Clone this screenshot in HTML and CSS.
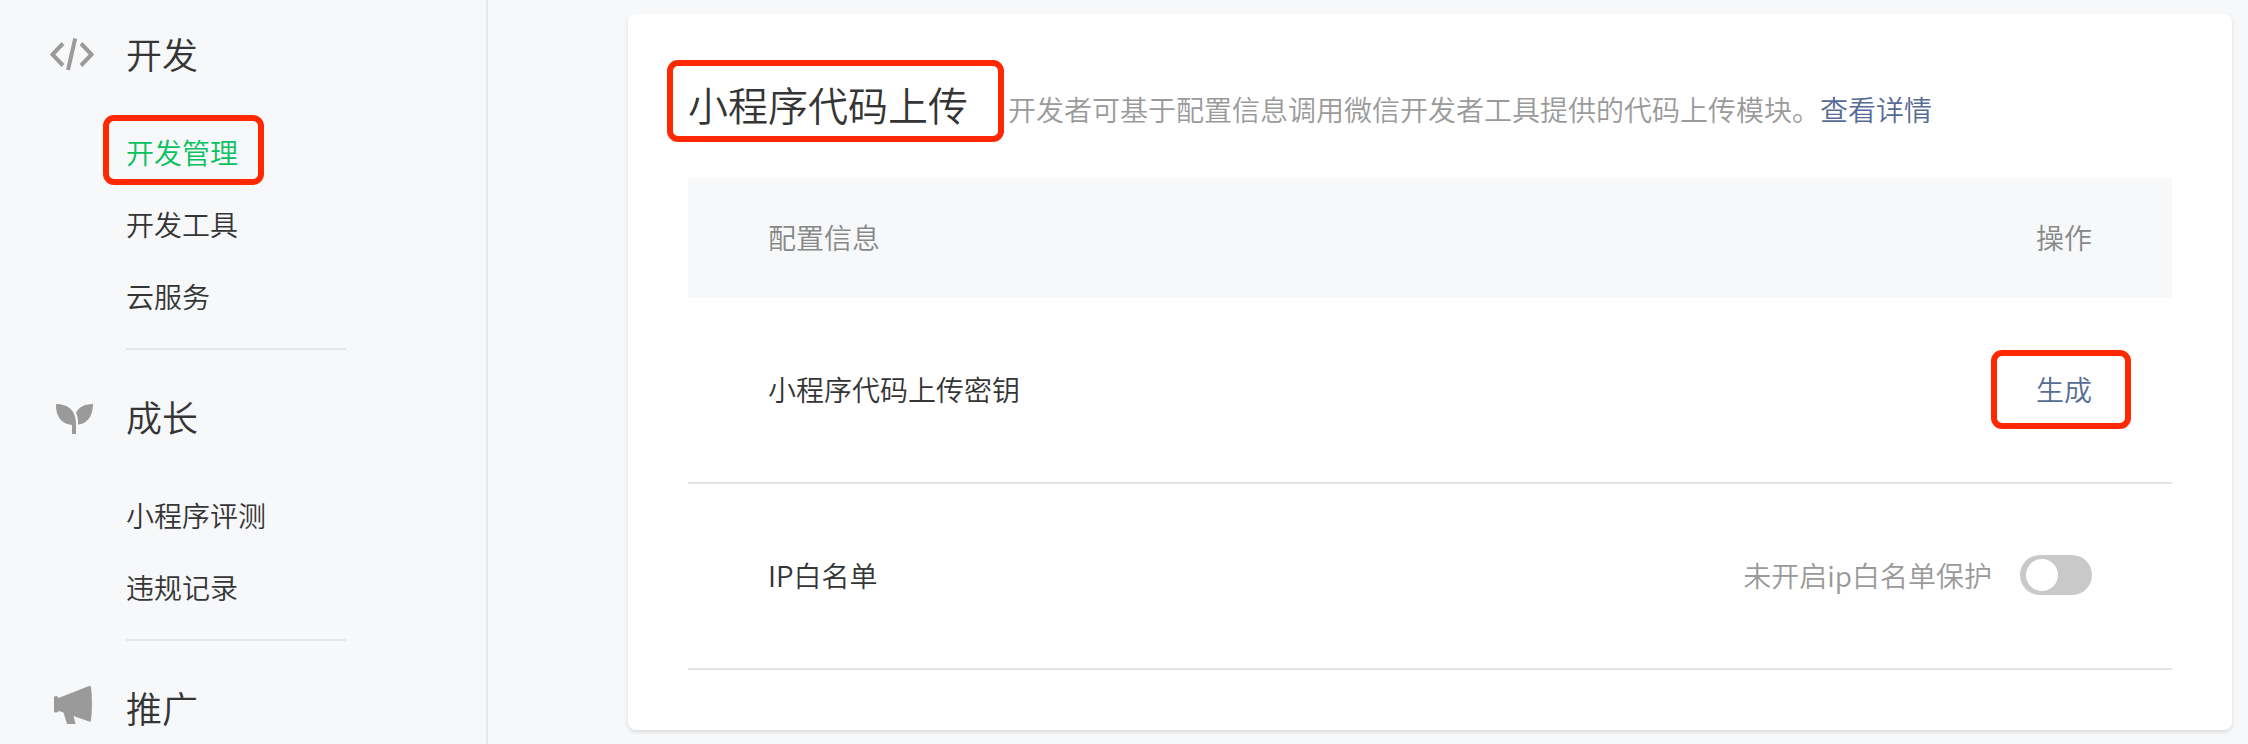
FILE: index.html
```html
<!DOCTYPE html>
<html lang="zh-CN">
<head>
<meta charset="utf-8">
<meta name="viewport" content="width=device-width, initial-scale=1">
<title>开发管理</title>
<link rel="stylesheet" href="styles.css">
</head>
<body>
<div class="layout">
  <nav class="sidebar">
    <section class="group">
      <h2 class="group-title">
        <svg class="icon" viewBox="0 -1 48 48" aria-hidden="true"><g fill="none" stroke="#9a9a9a" stroke-width="4"><path d="M15 13.500L4.500 24.500L15 35.500"/><path d="M33 13.500L43.500 24.500L33 35.500"/><path d="M27.200 8.500L20 40"/></g></svg>
        开发
      </h2>
      <ul class="menu">
        <li><a class="menu-link active marked mark-menu" href="#manage">开发管理</a></li>
        <li><a class="menu-link" href="#tools">开发工具</a></li>
        <li><a class="menu-link" href="#cloud">云服务</a></li>
      </ul>
    </section>
    <section class="group">
      <h2 class="group-title">
        <svg class="icon" viewBox="-2 -4 48 48" aria-hidden="true"><g fill="#9a9a9a"><path d="M6 8C18 8 25.500 14 26 27V38H22V29C12 28 5.500 21 6 8Z"/><path d="M43 8C34 8 29 11.500 26 16.500C27.500 20 28.300 24 28 28.500C37.500 28 43 19.500 43 8Z"/></g></svg>
        成长
      </h2>
      <ul class="menu">
        <li><a class="menu-link" href="#review">小程序评测</a></li>
        <li><a class="menu-link" href="#violation">违规记录</a></li>
      </ul>
    </section>
    <section class="group">
      <h2 class="group-title">
        <svg class="icon" viewBox="-2 -1 48 48" aria-hidden="true"><path fill="#9a9a9a" d="M4 13.500Q4 12 6 12Q8 12 8.500 14L39 2Q40.500 1.500 41 3Q43 20 41 36.500Q40.500 38.500 39 37.500L23.500 32L25.500 40H17L13.500 28.500L9 27Q8 28.500 6 28.500Q4 28.500 4 27Z"/></svg>
        推广
      </h2>
    </section>
  </nav>
  <main class="content">
    <section class="card">
      <header class="card-head">
        <h1 class="card-title marked mark-title">小程序代码上传</h1>
        <p class="card-desc">开发者可基于配置信息调用微信开发者工具提供的代码上传模块。<a class="link" href="#detail">查看详情</a></p>
      </header>
      <table class="table">
        <thead>
          <tr><th scope="col">配置信息</th><th scope="col" class="ops">操作</th></tr>
        </thead>
        <tbody>
          <tr>
            <td>小程序代码上传密钥</td>
            <td class="ops"><button class="link button marked mark-button" type="button">生成</button></td>
          </tr>
          <tr>
            <td>IP白名单</td>
            <td class="ops"><label class="switch-row">未开启ip白名单保护<input class="switch" type="checkbox" role="switch"></label></td>
          </tr>
        </tbody>
      </table>
    </section>
  </main>
</div>
</body>
</html>
```
FILE: styles.css
```css
* { box-sizing: border-box; }

body {
  margin: 0;
  background: #f7f8fa;
  color: #353535;
  font: 350 28px/40px "Noto Sans CJK SC DemiLight", "Noto Sans CJK SC", sans-serif;
}

h1, h2, p, ul { margin: 0; padding: 0; font-weight: inherit; }
ul { list-style: none; }
a { text-decoration: none; }

.layout {
  display: flex;
  height: 100vh;
  overflow: hidden;
}

.sidebar {
  flex: 0 0 488px;
  padding-top: 27px;
  border-right: 2px solid #e5e7e9;
}

.group-title {
  display: flex;
  align-items: center;
  gap: 30px;
  padding-left: 48px;
  font-size: 36px;
  line-height: 52px;
}

.icon { width: 48px; height: 48px; }

.menu {
  display: flex;
  flex-direction: column;
  gap: 32px;
  width: 220px;
  margin: 53px 0 40px 126px;
  padding-bottom: 32px;
  border-bottom: 2px solid #e5e7e9;
}

.menu-link { display: inline-block; vertical-align: top; color: #353535; }
.menu-link.active { color: #07c160; }

.content {
  flex: 1;
  min-width: 0;
  padding: 14px 16px 14px 140px;
}

.card {
  padding: 60px 60px;
  border-radius: 8px;
  background: #fff;
  box-shadow: 0 2px 4px rgba(0, 0, 0, 0.12);
}

.card-head {
  display: flex;
  align-items: baseline;
  gap: 40px;
  margin-bottom: 44px;
}

.card-title { font-size: 40px; line-height: 60px; }
.card-desc { color: #9a9a9a; }

.link { color: #576b95; }

.button {
  padding: 0;
  border: 0;
  background: none;
  font: inherit;
  cursor: pointer;
}

.table { width: 100%; border-spacing: 0; }

.table th {
  height: 120px;
  background: #f6f8f9;
  color: #888;
  font-weight: inherit;
}

.table td { height: 186px; border-bottom: 2px solid #e4e4ea; }
.table th, .table td { padding: 0 80px 2px; text-align: left; }
.table .ops { text-align: right; }

.switch-row {
  display: flex;
  align-items: center;
  justify-content: flex-end;
  gap: 28px;
  color: #9a9a9a;
}

.switch {
  appearance: none;
  width: 72px;
  height: 40px;
  margin: 0;
  padding: 4px 6px;
  border-radius: 20px;
  background: #c9c9c9;
}

.switch::before {
  content: "";
  display: block;
  width: 32px;
  height: 32px;
  border-radius: 50%;
  background: #fff;
}

.switch:checked { background: #07c160; }
.switch:checked::before { margin-left: auto; }

/* red frames drawn around highlighted items */
.marked { position: relative; }

.marked::after {
  content: "";
  position: absolute;
  border: 6px solid #ff2800;
  border-radius: 11px;
  pointer-events: none;
}

.mark-menu::after { inset: -17px -26px -13px -23px; }
.mark-title::after { inset: -14px -36px -8px -21px; }
.mark-button::after { inset: -19px -39px -20px -45px; }
```
